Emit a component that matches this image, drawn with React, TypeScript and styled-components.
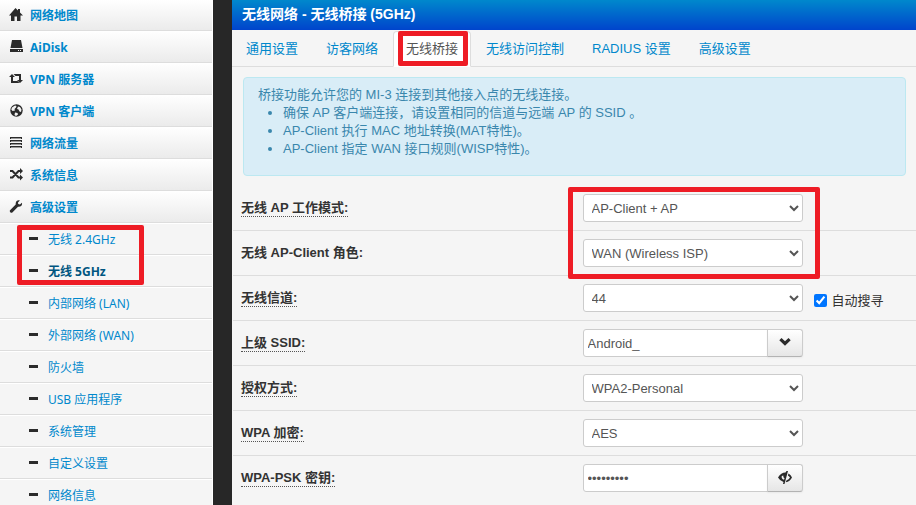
import React from "react";
import styled, { createGlobalStyle } from "styled-components";

const UI = `"Liberation Sans", "Noto Sans CJK SC", sans-serif`;
const MENU = `"Noto Sans", "Noto Sans CJK SC", sans-serif`;

const GlobalStyle = createGlobalStyle`
  *, *::before, *::after { box-sizing: border-box; }
  body {
    margin: 0;
    background: #272727;
    color: #333;
    font: 13px/18px ${UI};
    overflow: hidden;
  }
  a { text-decoration: none; }
  ul { margin: 0; padding: 0; }
`;

const Page = styled.div`
  display: flex;
  align-items: stretch;
  gap: 19px;
  min-height: 100vh;
`;

const Sidebar = styled.nav`
  flex: 0 0 213px;
  background: #f5f5f5;
  border-right: 1px solid #fff;
  font-family: ${MENU};
  font-size: 12px;
`;

const MenuList = styled.ul`
  list-style: none;
`;

const MenuItem = styled.li`
  height: 32px;
  border-bottom: 1px solid #ddd;
  background: linear-gradient(#fff, #ebebeb);
  &:first-child { height: 31px; }
`;

const MenuLink = styled.a`
  display: flex;
  align-items: center;
  gap: 7px;
  height: 100%;
  padding-left: 9px;
  color: #0088cc;
  font-weight: 700;
`;

const MenuText = styled.span`
  padding-top: 2px;
`;

const SubItem = styled.li`
  height: 32px;
  border-top: 1px solid #fff;
  border-bottom: 1px solid #ddd;
`;

const SubLink = styled.a<{ $current?: boolean }>`
  display: flex;
  align-items: center;
  gap: 10px;
  height: 100%;
  padding: 2px 0 0 29px;
  color: ${(p) => (p.$current ? "#005580" : "#0088cc")};
  font-weight: ${(p) => (p.$current ? 700 : 400)};
`;

const Dash = styled.span`
  width: 9px;
  height: 3px;
  margin-bottom: 3px;
  background: #2b2b2b;
`;

const Marked = styled.div`
  position: relative;
`;

const Mark = styled.span<{ $inset: string }>`
  position: absolute;
  inset: ${(p) => p.$inset};
  border: 5px solid #ee1c25;
  border-radius: 2px;
  pointer-events: none;
  z-index: 1;
`;

const Glyph = styled.svg`
  flex: none;
  display: block;
  width: 14px;
  height: 14px;
  fill: #2b2b2b;
`;

const Content = styled.main`
  flex: 1;
  min-width: 0;
  background: #f5f5f5;
`;

const Title = styled.h1`
  margin: 0;
  height: 30px;
  padding-left: 10px;
  background: linear-gradient(#0088cc, #0044cc);
  color: #fff;
  font-size: 14px;
  line-height: 29px;
`;

const Tabs = styled.ul`
  display: flex;
  gap: 2px;
  list-style: none;
  margin-top: 1px;
  padding-left: 1px;
  border-bottom: 1px solid #ddd;
`;

const TabItem = styled.li`
  margin-bottom: -1px;
`;

const Tab = styled.a<{ $active?: boolean }>`
  display: block;
  height: 36px;
  padding: 8px 12px;
  border: 1px solid ${(p) => (p.$active ? "#ddd" : "transparent")};
  border-bottom-color: ${(p) => (p.$active ? "#fff" : "transparent")};
  border-radius: 4px 4px 0 0;
  background: ${(p) => (p.$active ? "#fff" : "transparent")};
  color: ${(p) => (p.$active ? "#555" : "#0088cc")};
  white-space: nowrap;
`;

const Info = styled.section`
  margin: 10px 10px 9px 11px;
  padding: 8px 35px 17px 14px;
  border: 1px solid #bce8f1;
  border-radius: 4px;
  background: #d9edf7;
  color: #3a87ad;
`;

const InfoList = styled.ul`
  padding-left: 25px;
`;

const Row = styled.div<{ $first?: boolean }>`
  display: grid;
  grid-template-columns: 1fr 1fr;
  align-items: center;
  margin-left: 1px;
  padding: 8px 0;
  border-top: 1px solid ${(p) => (p.$first ? "transparent" : "#ddd")};
`;

const LabelCell = styled.div`
  display: flex;
  padding-left: 8px;
`;

const Label = styled.label<{ $plain?: boolean }>`
  height: 18px;
  border-bottom: 1px dotted ${(p) => (p.$plain ? "transparent" : "#555")};
  font-weight: 700;
  line-height: 18px;
`;

const Field = styled.div`
  display: flex;
  align-items: center;
  padding-left: 8px;
`;

const Select = styled.select`
  width: 220px;
  height: 28px;
  padding: 4px;
  border: 1px solid #ccc;
  border-radius: 3px;
  background-color: #fff;
  color: #555;
  font: 13px/18px ${UI};
`;

const TextInput = styled.input`
  width: 185px;
  height: 28px;
  padding: 4px;
  border: 1px solid #ccc;
  border-radius: 3px 0 0 3px;
  background: #fff;
  color: #555;
  font: 13px/18px ${UI};
`;

const AddOn = styled.button`
  display: flex;
  align-items: center;
  justify-content: center;
  width: 36px;
  height: 28px;
  margin-left: -1px;
  padding: 0;
  border: 1px solid #ccc;
  border-bottom-color: #b3b3b3;
  border-radius: 0 3px 3px 0;
  background: linear-gradient(#fff, #e6e6e6);
  box-shadow: 0 1px 2px rgba(0, 0, 0, 0.05);
`;

const CheckLabel = styled.label`
  display: flex;
  align-items: center;
  gap: 5px;
  margin-left: 11px;
  padding-top: 5px;
`;

const Check = styled.input`
  width: 13px;
  height: 13px;
  margin: 0;
`;

const glyphs: Record<string, React.ReactNode> = {
  home: <path d="M6.500 0 9 2.500V1h2v3.500l3 3H11.500V13H8V8.500H5.500V13H2V7.500H0z" />,
  disk: (
    <path
      fillRule="evenodd"
      d="M3 0h9l1.500 8h-12zM1 9h13v3H1zM9 10v1h1v-1zM11 10v1h1v-1z"
    />
  ),
  retweet: (
    <path d="M3 2 6 5H4v4h4.500l2 2H2V5H0zM4.500 2H12v6h2l-3 3-3-3h2V4H6.500z" />
  ),
  globe: (
    <>
      <circle cx="7.500" cy="6.500" r="6.200" />
      <path
        fill="#f3f3f3"
        d="M3 3.500 6 1.500l1.500.5L7 3.500 5.500 5 6 6.500 3.500 7 2.300 5.500zM9 2.500l2 .5 1.500 2.500-.5 2.500-1.500-.5L9.500 5.500 8 5zM6 8.500l2.500.5.5 1.500-2 1.500-1.500-1z"
      />
    </>
  ),
  traffic: (
    <>
      <path d="M1 1h12v2H1zM1 4h12v2H1zM1 7h12v2H1zM1 10h12v2H1z" />
      <path fill="#999" d="M2 2h10v1H2zM2 5h10v1H2zM2 8h10v1H2zM2 11h10v1H2z" />
    </>
  ),
  shuffle: (
    <>
      <path
        fill="none"
        stroke="#2b2b2b"
        strokeWidth="2"
        d="M1 3h2.500l6 6.500H12M1 9.500h2.500L9.500 3H12"
      />
      <path d="M11 0l3 3-3 3zM11 6.500l3 3-3 3z" />
    </>
  ),
  wrench: (
    <path d="M12.900 2.700 11 4.500 9.200 4 9 2.500 10.800.4C8.600-.2 6.500 1.300 6.700 3.800v.7L1.300 9.900a1.600 1.600 0 0 0 2.300 2.300L9 6.800c2.700.5 4.700-1.700 3.900-4.100z" />
  ),
  chevron: <path d="M3.500 2 7 5.300 10.500 2l2.200 2.200L7 9.800 1.300 4.200z" />,
  eye: (
    <path
      fillRule="evenodd"
      d="M0 6.500Q3 1.500 7.500 1.500L8.500 0h1.500L6.500 13H5l.5-2Q2 10 0 6.500zM3.800 5q-.8 2.800 2.200 3.800L6.500 7.200Q5 6.500 5.300 4.500zM10.500 2.500Q13 4 14 6.500 12 10.500 7.800 11.300L8.400 9.400Q11 8.500 12 6.500 11.300 5.300 9.900 4.500z"
    />
  ),
};

const Icon = ({ name }: { name: string }) => (
  <Glyph viewBox="0 0 14 14" aria-hidden="true">
    {glyphs[name]}
  </Glyph>
);

const menu = [
  ["home", "网络地图"],
  ["disk", "AiDisk"],
  ["retweet", "VPN 服务器"],
  ["globe", "VPN 客户端"],
  ["traffic", "网络流量"],
  ["shuffle", "系统信息"],
  ["wrench", "高级设置"],
];

const wireless = ["无线 2.4GHz", "无线 5GHz"];
const others = [
  "内部网络 (LAN)",
  "外部网络 (WAN)",
  "防火墙",
  "USB 应用程序",
  "系统管理",
  "自定义设置",
  "网络信息",
];

const tabs = ["通用设置", "访客网络", "无线桥接", "无线访问控制", "RADIUS 设置", "高级设置"];

const SubEntry = ({ text, current }: { text: string; current?: boolean }) => (
  <SubItem>
    <SubLink href="#" $current={current}>
      <Dash />
      {text}
    </SubLink>
  </SubItem>
);

type FormRowProps = {
  id: string;
  label: string;
  plain?: boolean;
  first?: boolean;
  children: React.ReactNode;
};

const FormRow = ({ id, label, plain, first, children }: FormRowProps) => (
  <Row $first={first}>
    <LabelCell>
      <Label htmlFor={id} $plain={plain}>
        {label}
      </Label>
    </LabelCell>
    <Field>{children}</Field>
  </Row>
);

const Choice = ({ id, value }: { id: string; value: string }) => (
  <Select id={id} defaultValue={value}>
    <option>{value}</option>
  </Select>
);

const FieldMark = styled(Mark)`
  width: 252px;
`;

export default function App() {
  return (
    <>
      <GlobalStyle />
      <Page>
        <Sidebar>
          <MenuList>
            {menu.map(([icon, text]) => (
              <MenuItem key={text}>
                <MenuLink href="#">
                  <Icon name={icon} />
                  <MenuText>{text}</MenuText>
                </MenuLink>
              </MenuItem>
            ))}
          </MenuList>
          <Marked>
            <MenuList>
              {wireless.map((text, i) => (
                <SubEntry key={text} text={text} current={i === 1} />
              ))}
            </MenuList>
            <Mark $inset="2px 68px 2px 17px" />
          </Marked>
          <MenuList>
            {others.map((text) => (
              <SubEntry key={text} text={text} />
            ))}
          </MenuList>
        </Sidebar>
        <Content>
          <Title>无线网络 - 无线桥接 (5GHz)</Title>
          <Tabs>
            {tabs.map((text) => (
              <TabItem key={text}>
                {text === "无线桥接" ? (
                  <Marked>
                    <Tab href="#" $active>
                      {text}
                    </Tab>
                    <Mark $inset="0 3px 1px 5px" />
                  </Marked>
                ) : (
                  <Tab href="#">{text}</Tab>
                )}
              </TabItem>
            ))}
          </Tabs>
          <Info>
            桥接功能允许您的 MI-3 连接到其他接入点的无线连接。
            <InfoList>
              <li>确保 AP 客户端连接，请设置相同的信道与远端 AP 的 SSID 。</li>
              <li>AP-Client 执行 MAC 地址转换(MAT特性)。</li>
              <li>AP-Client 指定 WAN 接口规则(WISP特性)。</li>
            </InfoList>
          </Info>
          <form>
            <Marked>
              <FormRow id="mode" label="无线 AP 工作模式:" first>
                <Choice id="mode" value="AP-Client + AP" />
              </FormRow>
              <FormRow id="role" label="无线 AP-Client 角色:" plain>
                <Choice id="role" value="WAN (Wireless ISP)" />
              </FormRow>
              <FieldMark $inset="2px auto -4px calc(50% - 6px)" />
            </Marked>
            <FormRow id="channel" label="无线信道:">
              <Choice id="channel" value="44" />
              <CheckLabel>
                <Check type="checkbox" defaultChecked />
                自动搜寻
              </CheckLabel>
            </FormRow>
            <FormRow id="ssid" label="上级 SSID:">
              <TextInput id="ssid" type="text" defaultValue="Android_" />
              <AddOn type="button" aria-label="SSID">
                <Icon name="chevron" />
              </AddOn>
            </FormRow>
            <FormRow id="auth" label="授权方式:">
              <Choice id="auth" value="WPA2-Personal" />
            </FormRow>
            <FormRow id="crypto" label="WPA 加密:">
              <Choice id="crypto" value="AES" />
            </FormRow>
            <FormRow id="psk" label="WPA-PSK 密钥:">
              <TextInput id="psk" type="password" defaultValue="123456789" />
              <AddOn type="button" aria-label="WPA-PSK">
                <Icon name="eye" />
              </AddOn>
            </FormRow>
          </form>
        </Content>
      </Page>
    </>
  );
}
